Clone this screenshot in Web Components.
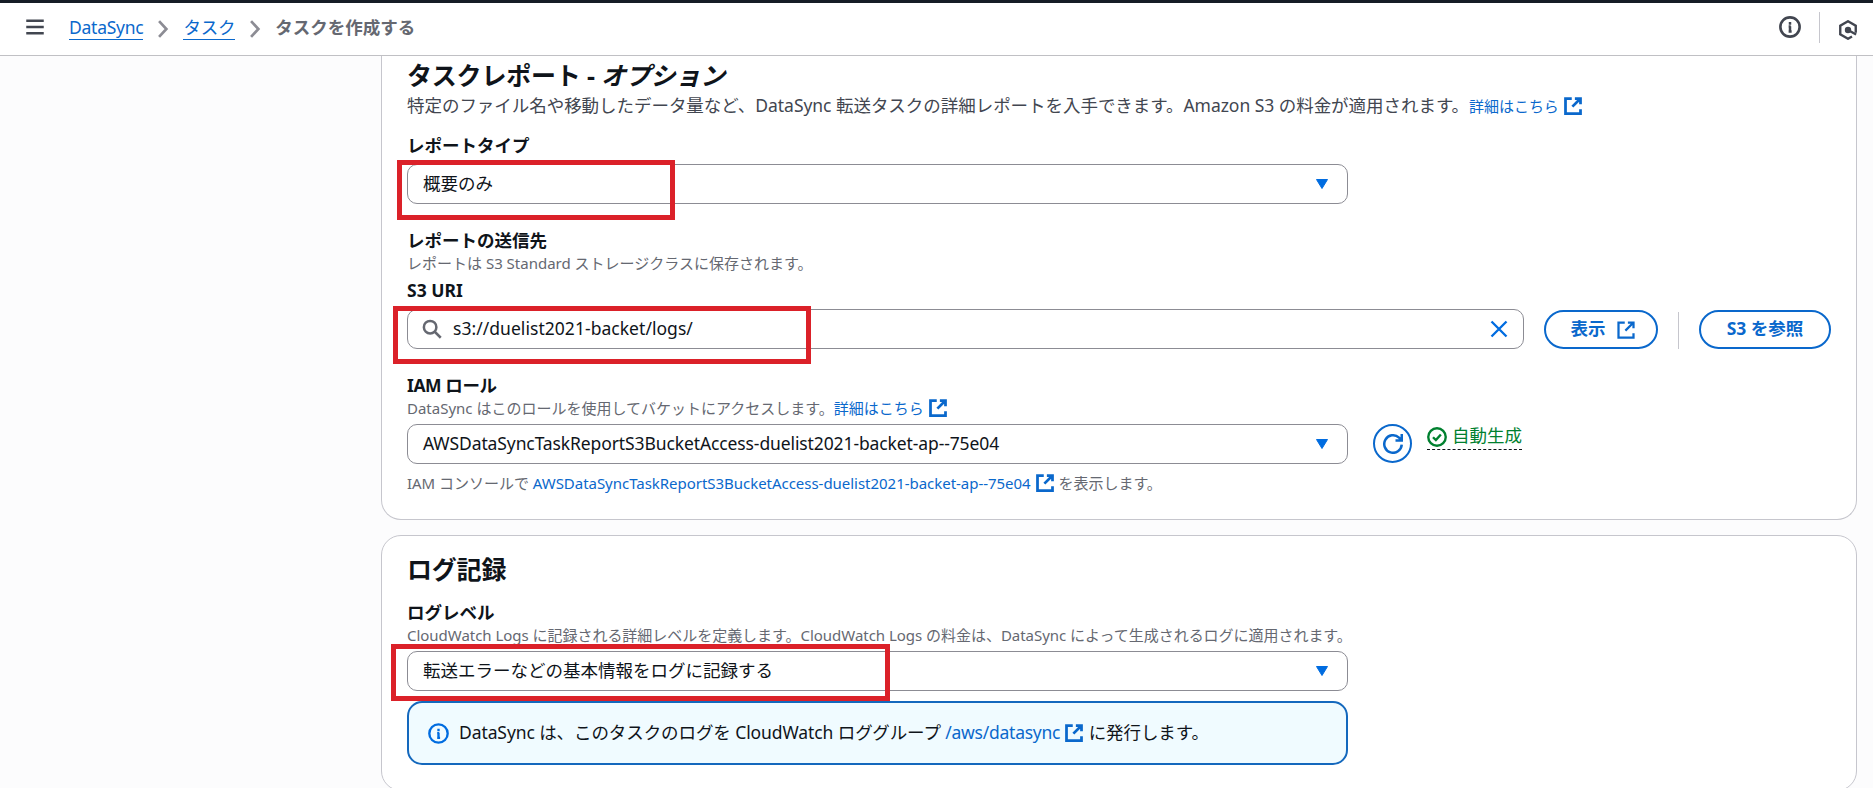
<!DOCTYPE html>
<html lang="ja">
<head>
<meta charset="UTF-8">
<title>DataSync</title>
<style>
    html, body {
        margin: 0;
        height: 100%;
        overflow: hidden;
    }

    body {
        --link: #0a68cc;
        --text: #0f141a;
        --muted: #656871;
        --line: #c6c6cd;
        position: relative;
        background: #fcfcfd;
        color: var(--text);
        font-family: "Noto Sans", "Noto Sans CJK JP", sans-serif;
        font-size: 17.5px;
        line-height: 25px;
    }

    main {
        display: flex;
        flex-direction: column;
        gap: 15px;
        padding: 0 16px 0 381px;
    }
</style>
</head>
<body>
    <top-bar>
        <crumb-item href="#">DataSync</crumb-item>
        <crumb-item href="#">タスク</crumb-item>
        <crumb-item>タスクを作成する</crumb-item>
    </top-bar>

    <main>
        <form-card scrolled>
            <span slot="title" style="letter-spacing: -0.2px">タスクレポート - <i>オプション</i></span>
            <span slot="description" style="letter-spacing: -0.04px">特定のファイル名や移動したデータ量など、DataSync 転送タスクの詳細レポートを入手できます。Amazon S3 の料金が適用されます。<ext-link small>詳細はこちら</ext-link></span>

            <form-field label="レポートタイプ" style="margin-top: 14px">
                <select-box>概要のみ</select-box>
            </form-field>

            <form-field label="レポートの送信先" style="margin-top: 24px">
                <span slot="hint">レポートは S3 Standard ストレージクラスに保存されます。</span>
            </form-field>

            <form-field label="S3 URI" wide>
                <search-input>s3://duelist2021-backet/logs/</search-input>
                <pill-button slot="actions" style="width: 114px" external>表示</pill-button>
                <v-rule slot="actions"></v-rule>
                <pill-button slot="actions" style="width: 132px">S3 を参照</pill-button>
            </form-field>

            <form-field label="IAM ロール" style="margin-top: 24px; --label-spacing: -0.4px">
                <span slot="hint">DataSync はこのロールを使用してバケットにアクセスします。<ext-link small>詳細はこちら</ext-link></span>
                <select-box style="letter-spacing: -0.11px">AWSDataSyncTaskReportS3BucketAccess-duelist2021-backet-ap--75e04</select-box>
                <round-button slot="actions"></round-button>
                <status-label slot="actions">自動生成</status-label>
                <span slot="constraint" style="letter-spacing: -0.03px">IAM コンソールで <ext-link small>AWSDataSyncTaskReportS3BucketAccess-duelist2021-backet-ap--75e04</ext-link> を表示します。</span>
            </form-field>
        </form-card>

        <form-card>
            <span slot="title" style="letter-spacing: -0.2px">ログ記録</span>
            <form-field label="ログレベル" style="margin-top: 16px">
                <span slot="hint" style="letter-spacing: -0.03px">CloudWatch Logs に記録される詳細レベルを定義します。CloudWatch Logs の料金は、DataSync によって生成されるログに適用されます。</span>
                <select-box>転送エラーなどの基本情報をログに記録する</select-box>
            </form-field>
            <info-alert>DataSync は、このタスクのログを CloudWatch ロググループ <ext-link style="letter-spacing: -0.25px">/aws/datasync</ext-link> に発行します。</info-alert>
        </form-card>
    </main>

    <!-- red annotation frames over the page -->
    <mark-frame style="left: 397px; top: 160px; width: 278px; height: 60px"></mark-frame>
    <mark-frame style="left: 393px; top: 306px; width: 418px; height: 58px"></mark-frame>
    <mark-frame style="left: 391px; top: 644px; width: 499px; height: 57px"></mark-frame>

<script>
const icons = {
    menu: '<path d="M1 3h14M1 8h14M1 13h14"/>',
    info: '<circle cx="8" cy="8" r="7"/><path d="M8 11V7.5M8 6.3V4.4M7 11.3h2.2M7 7.7h1.5" stroke-width="1.8"/>',
    hex: '<path d="M14.2 10.2V4.6L8 1 1.8 4.6v6.9L8 15l3.2-1.8"/><circle cx="8" cy="8" r="1.6" fill="currentColor"/><path d="M8 8l6.500 3.600"/>',
    external: '<path d="M7 2H2v12h12v-3.500M9.500 2H14v4.500M14 2L7.500 8.500"/>',
    search: '<circle cx="6.500" cy="6.500" r="5"/><path d="M10.200 10.200L15 15"/>',
    close: '<path d="M2 2l12 12M14 2L2 14"/>',
    refresh: '<path d="M15 8.500a7 7 0 1 1-2.200-5.600L15 5M15 0v5.200h-5"/>',
    check: '<circle cx="8" cy="8" r="7"/><path d="M4.800 8.200l2.300 2.300 4-4.500"/>',
    chevron: '<path d="M4.500 1L11 8l-6.500 7"/>',
};

// no whitespace around the svg: it also stands inline in links
const icon = (name, size = 20, stroke = 2) =>
    `<svg class="${name}" width="${size}" height="${size}" viewBox="0 0 16 16" fill="none" stroke="currentColor" stroke-width="${stroke}">${icons[name]}</svg>`;

class BaseElement extends HTMLElement {
    constructor() {
        super();
        this.attachShadow({mode: 'open'});
    }

    connectedCallback() {
        this.shadowRoot.innerHTML = this.render();
    }
}

class TopBar extends BaseElement {
    render() {
        return /* html */ `
            <style>
                :host {
                    display: flex;
                    align-items: center;
                    box-sizing: border-box;
                    height: 56px;
                    padding: 0 15px 5px 25px;
                    border-top: 3px solid #161d26;
                    border-bottom: 1px solid #c0c0c4;
                    background: #fff;
                    color: #424650;
                }
                nav { display: flex; margin: 2px 0 0 24px; flex: 1; }
                svg { display: block; }
                .info { margin-top: 1px; }
                .rule { width: 1px; height: 31px; background: var(--line); margin: 1px 18px 0 18px; }
                .hex { margin-top: 7px; }
            </style>
            ${icon('menu', 20, 1.9)}
            <nav><slot></slot></nav>
            ${icon('info', 22, 1.9)}
            <div class="rule"></div>
            ${icon('hex', 20, 1.9)}
        `;
    }
}

class CrumbItem extends BaseElement {
    render() {
        const href = this.getAttribute('href');
        return /* html */ `
            <style>
                :host { display: flex; align-items: center; color: var(--muted); font-weight: 700; }
                a {
                    color: var(--link);
                    font-weight: 400;
                    line-height: 23px;
                    text-decoration: none;
                    letter-spacing: -0.25px;
                    border-bottom: 1px solid var(--link);
                }
                svg { color: #8c8c94; margin: 3px 11px 0; }
            </style>
            ${href ? `<a href="${href}"><slot></slot></a>${icon('chevron', 18, 2.4)}` : '<slot></slot>'}
        `;
    }
}

class FormCard extends BaseElement {
    render() {
        return /* html */ `
            <style>
                :host {
                    display: block;
                    box-sizing: border-box;
                    padding: 18px 25px 25px;
                    border: 1px solid var(--line);
                    border-radius: 20px;
                    background: #fff;
                }
                /* top edge is above the scroll position */
                :host([scrolled]) {
                    border-top: 0;
                    border-radius: 0 0 20px 20px;
                    padding-top: 4px;
                    padding-bottom: 26px;
                }
                h2 { margin: 0; font-size: 25px; line-height: 30px; font-weight: 700; }
                .desc { color: #424650; white-space: nowrap; }
                :host([scrolled]) .desc { padding-top: 3px; }
            </style>
            <h2><slot name="title"></slot></h2>
            <div class="desc"><slot name="description"></slot></div>
            <slot></slot>
        `;
    }
}

class FormField extends BaseElement {
    render() {
        const has = (name) => this.querySelector(`[slot="${name}"]`);
        const control = this.querySelector('select-box, search-input');
        return /* html */ `
            <style>
                :host { display: block; margin-top: 5px; }
                label { display: block; font-weight: 700; letter-spacing: var(--label-spacing, 0); }
                .hint, .constraint {
                    height: 20px;
                    color: var(--muted);
                    font-size: 15px;
                    line-height: 20px;
                    white-space: nowrap;
                }
                .row { display: flex; margin-top: 6px; }
                .control { width: 941px; flex: none; }
                :host([wide]) .control { width: 1117px; }
                .constraint { margin-top: 9px; }
            </style>
            <label>${this.getAttribute('label')}</label>
            ${has('hint') ? '<div class="hint"><slot name="hint"></slot></div>' : ''}
            ${control ? '<div class="row"><div class="control"><slot></slot></div><slot name="actions"></slot></div>' : ''}
            ${has('constraint') ? '<div class="constraint"><slot name="constraint"></slot></div>' : ''}
        `;
    }
}

class SelectBox extends BaseElement {
    render() {
        return /* html */ `
            <style>
                :host {
                    display: flex;
                    align-items: center;
                    justify-content: space-between;
                    box-sizing: border-box;
                    height: 40px;
                    padding: 0 18px 0 15px;
                    border: 1px solid #8c8c94;
                    border-radius: 10px;
                    background: #fff;
                    white-space: nowrap;
                }
                span { padding-bottom: 1px; }
                svg { fill: #006ce0; stroke: #006ce0; stroke-linejoin: round; }
            </style>
            <span><slot></slot></span>
            <svg width="14" height="12" viewBox="0 0 14 12"><path d="M1.500 1.500h11L7 10.500z"/></svg>
        `;
    }
}

class SearchInput extends BaseElement {
    render() {
        return /* html */ `
            <style>
                :host {
                    display: flex;
                    align-items: center;
                    box-sizing: border-box;
                    height: 40px;
                    padding: 0 14px;
                    border: 1px solid #8c8c94;
                    border-radius: 10px;
                    background: #fff;
                }
                span { flex: 1; margin-left: 11px; padding-bottom: 1px; letter-spacing: 0.04px; }
                .search { color: var(--muted); }
                .close { color: #006ce0; }
            </style>
            ${icon('search', 20, 2)}
            <span><slot></slot></span>
            ${icon('close', 20, 1.9)}
        `;
    }
}

class PillButton extends BaseElement {
    render() {
        return /* html */ `
            <style>
                :host {
                    display: flex;
                    align-items: center;
                    justify-content: center;
                    gap: 10px;
                    box-sizing: border-box;
                    height: 39px;
                    margin: 1px 0 0 20px;
                    padding-bottom: 2px;
                    border: 2px solid var(--link);
                    border-radius: 20px;
                    color: var(--link);
                    font-weight: 700;
                    white-space: nowrap;
                }
                :host([external]) { padding-left: 4px; }
                svg { margin-top: 3px; }
            </style>
            <slot></slot>
            ${this.hasAttribute('external') ? icon('external', 20, 1.8) : ''}
        `;
    }
}

class RoundButton extends BaseElement {
    render() {
        return /* html */ `
            <style>
                :host {
                    display: flex;
                    align-items: center;
                    justify-content: center;
                    box-sizing: border-box;
                    width: 39px;
                    height: 39px;
                    margin-left: 25px;
                    border: 2px solid var(--link);
                    border-radius: 50%;
                    color: var(--link);
                }
            </style>
            ${icon('refresh', 20, 2)}
        `;
    }
}

class VRule extends BaseElement {
    render() {
        return /* html */ `
            <style>
                :host { display: block; width: 1px; height: 37px; margin: 3px 0 0 20px; background: var(--line); }
            </style>
        `;
    }
}

class StatusLabel extends BaseElement {
    render() {
        return /* html */ `
            <style>
                :host {
                    display: flex;
                    align-items: center;
                    gap: 5px;
                    height: 22px;
                    margin-left: 15px;
                    padding-bottom: 3px;
                    border-bottom: 1px dashed #0f141a;
                    color: #00802f;
                }
                svg { margin-top: 3px; }
            </style>
            ${icon('check', 20, 1.9)}<slot></slot>
        `;
    }
}

class ExtLink extends BaseElement {
    render() {
        return '<style>'
            + ':host { display: inline; color: var(--link); }'
            + ':host([small]) { font-size: 15px; }'
            + 'svg { margin-left: 4px; vertical-align: -4px; }'
            + '</style><slot></slot>' + icon('external', 20, 2.2);
    }
}

class InfoAlert extends BaseElement {
    render() {
        return /* html */ `
            <style>
                :host {
                    display: flex;
                    align-items: center;
                    gap: 10px;
                    box-sizing: border-box;
                    width: 941px;
                    height: 64px;
                    margin-top: 10px;
                    padding: 0 19px;
                    border: 2px solid #1468bd;
                    border-radius: 15px;
                    background: #f0fbff;
                    white-space: nowrap;
                    letter-spacing: -0.09px;
                }
                div { padding-bottom: 2px; }
                svg { color: #006ce0; }
            </style>
            ${icon('info', 21, 1.8)}
            <div><slot></slot></div>
        `;
    }
}

class MarkFrame extends BaseElement {
    render() {
        return /* html */ `
            <style>
                :host { position: absolute; display: block; box-sizing: border-box; border: 5px solid #db2129; }
            </style>
        `;
    }
}

customElements.define('top-bar', TopBar);
customElements.define('crumb-item', CrumbItem);
customElements.define('form-card', FormCard);
customElements.define('form-field', FormField);
customElements.define('select-box', SelectBox);
customElements.define('search-input', SearchInput);
customElements.define('pill-button', PillButton);
customElements.define('round-button', RoundButton);
customElements.define('v-rule', VRule);
customElements.define('status-label', StatusLabel);
customElements.define('ext-link', ExtLink);
customElements.define('info-alert', InfoAlert);
customElements.define('mark-frame', MarkFrame);
</script>
</body>
</html>
